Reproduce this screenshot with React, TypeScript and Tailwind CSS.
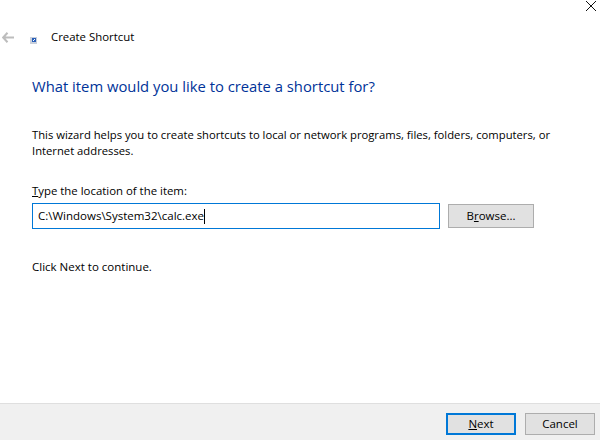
export default function App() {
  return (
    <div className="flex h-[440px] w-[600px] flex-col overflow-hidden bg-white text-[11.4px] leading-[16px] text-black [font-family:'Open_Sans','Noto_Sans',sans-serif]">
      <div className="flex h-[11px] justify-end pr-[4px] pt-[1px]">
        <svg width="10" height="10" viewBox="0 0 10 10" className="shrink-0">
          <path d="M0 0L10 10M10 0L0 10" stroke="#111" strokeWidth="1" fill="none" />
        </svg>
      </div>

      <div className="mt-[18px] flex h-[16px] items-center">
        <svg width="12" height="11" viewBox="0 0 12 11" className="ml-[2px] mt-[1px]">
          <path d="M5.5 0.8L1.2 5.5L5.5 10.2M1.2 5.5H12" stroke="#bdbdbd" strokeWidth="2" fill="none" />
        </svg>
        <svg width="7" height="7" viewBox="0 0 7 7" className="ml-[16px] mt-[6px]">
          <rect width="7" height="7" fill="#c9d0dc" />
          <rect x="2" y="1" width="4" height="4" fill="#2a5fb8" />
          <path d="M3 4L5 2" stroke="#fff" strokeWidth="1" />
        </svg>
        <span className="ml-[14px] mb-[1px]">Create Shortcut</span>
      </div>

      <h1 className="ml-[32px] mt-[31px] text-[14.8px] font-normal leading-[20px] text-[#003399]">
        What item would you like to create a shortcut for?
      </h1>

      <p className="ml-[32px] mt-[31px] w-[530px] text-[11.25px] leading-[16px]">
        This wizard helps you to create shortcuts to local or network programs, files, folders, computers, or Internet addresses.
      </p>

      <label className="ml-[32px] mt-[24px] text-[11.4px] leading-[16px]">
        <span className="underline">T</span>ype the location of the item:
      </label>

      <div className="ml-[32px] mt-[4px] flex items-center">
        <div className="flex h-[26px] w-[408px] items-center border border-[#0078d7] pl-[5px] text-[11.5px]">
          <span>C:\Windows\System32\calc.exe</span>
          <span className="h-[15px] w-px bg-black" />
        </div>
        <button className="ml-[8px] h-[24px] w-[86px] border border-[#adadad] bg-[#e1e1e1] text-[11.5px]">
          B<span className="underline">r</span>owse...
        </button>
      </div>

      <p className="ml-[32px] mt-[30px] text-[11.5px] leading-[16px]">Click Next to continue.</p>

      <div className="mt-auto flex h-[37px] items-start justify-end gap-[9px] border-t border-[#dfdfdf] bg-[#f0f0f0] pr-[5px] pt-[9px]">
        <button className="h-[22px] w-[70px] border-2 border-[#0078d7] bg-[#e1e1e1] text-[11.5px]">
          <span className="underline">N</span>ext
        </button>
        <button className="h-[22px] w-[70px] border border-[#adadad] bg-[#e1e1e1] text-[11.5px]">Cancel</button>
      </div>
    </div>
  )
}
